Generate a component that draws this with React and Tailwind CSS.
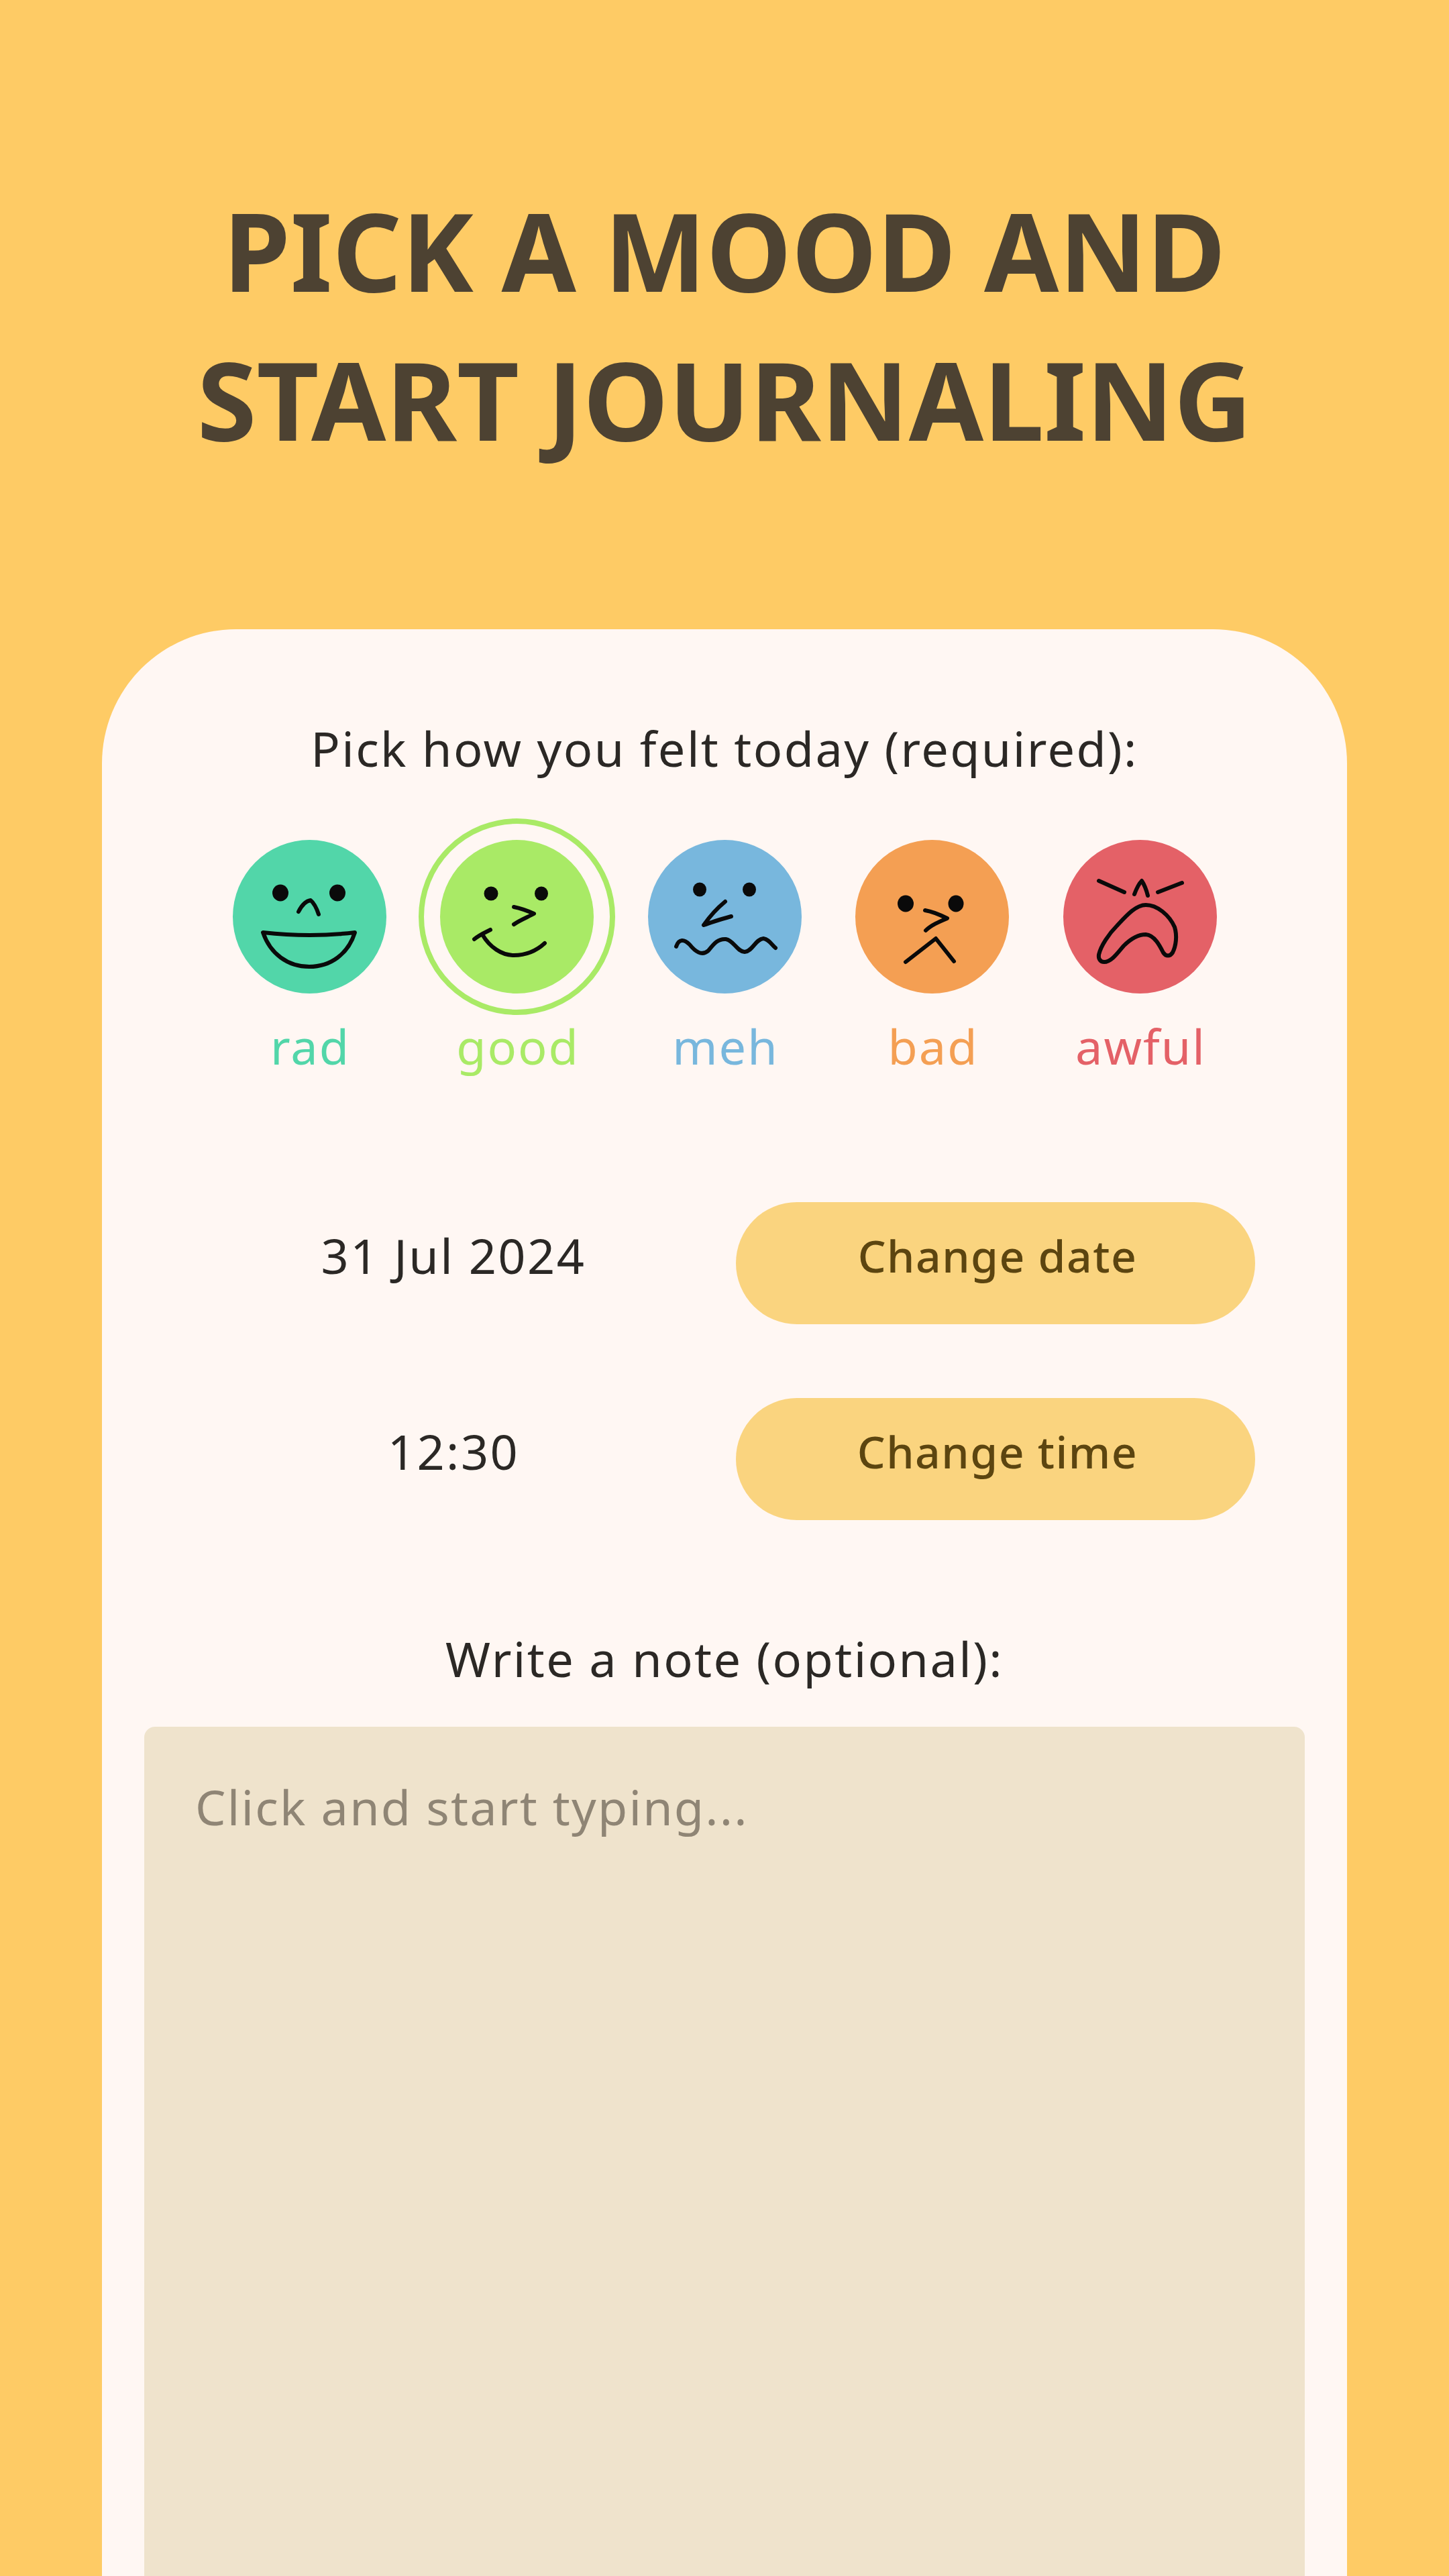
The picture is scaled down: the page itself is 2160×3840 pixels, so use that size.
const moods = [
  { name: 'rad', bg: 'bg-[#52d6a9]', text: 'text-[#52d6a9]' },
  { name: 'good', bg: 'bg-[#a9ea66]', text: 'text-[#a9ea66]', selected: true },
  { name: 'meh', bg: 'bg-[#78b7dd]', text: 'text-[#78b7dd]' },
  { name: 'bad', bg: 'bg-[#f49f53]', text: 'text-[#f49f53]' },
  { name: 'awful', bg: 'bg-[#e46167]', text: 'text-[#e46167]' },
];

function FaceDrawing({ name }) {
  return (
    <svg viewBox="0 0 229 229" className="w-full h-full" fill="none" stroke="#0a0a0a" strokeWidth="6" strokeLinecap="round" strokeLinejoin="round">
      {name === 'rad' && (
        <>
          <ellipse cx="71" cy="79" rx="12" ry="12.5" fill="#0a0a0a" stroke="none" />
          <ellipse cx="156" cy="79" rx="12" ry="12.5" fill="#0a0a0a" stroke="none" />
          <path d="M98 107 C103 97 109 91 116 90 C121 94 125 102 128 111" />
          <path d="M45 138 C90 143 140 143 182 138 C172 170 146 189 114 189 C82 189 56 170 45 138 Z" />
        </>
      )}
      {name === 'good' && (
        <>
          <ellipse cx="76" cy="80" rx="10.5" ry="10.5" fill="#0a0a0a" stroke="none" />
          <ellipse cx="151" cy="80" rx="10" ry="10.5" fill="#0a0a0a" stroke="none" />
          <path d="M110 100 C120 102 131 106 140 110 C131 115 118 120 110 126" />
          <path d="M51 148 C58 142 67 138 75 134" />
          <path d="M63 141 C74 160 92 172 110 172 C128 172 144 165 156 154" />
        </>
      )}
      {name === 'meh' && (
        <>
          <ellipse cx="77" cy="74" rx="10" ry="10.5" fill="#0a0a0a" stroke="none" />
          <ellipse cx="151" cy="74" rx="10" ry="10.5" fill="#0a0a0a" stroke="none" />
          <path d="M115 92 C104 101 92 114 83 127 C96 122 110 118 124 114" />
          <path d="M42 159 C46 147 54 148 62 156 C70 166 80 174 90 165 C98 155 104 147 116 148 C128 150 132 166 144 167 C156 166 160 148 172 147 C180 148 184 156 190 161" />
        </>
      )}
      {name === 'bad' && (
        <>
          <ellipse cx="75" cy="95" rx="12" ry="12.5" fill="#0a0a0a" stroke="none" />
          <ellipse cx="150" cy="95" rx="11.5" ry="12.5" fill="#0a0a0a" stroke="none" />
          <path d="M104 105 C116 107 127 112 137 117 C125 122 113 127 105 135" />
          <path d="M75 182 L120 147 L147 181" />
        </>
      )}
      {name === 'awful' && (
        <>
          <path d="M53 61 L91 78" />
          <path d="M141 78 L177 64" />
          <path d="M106 81 C109 73 112 66 117 61 C121 67 124 75 126 83" />
          <path d="M53 171 C56 158 68 140 80 128 C94 113 108 97 123 97 C140 97 158 112 166 130 C170 143 168 158 163 168 C159 174 153 174 149 168 C144 158 136 142 123 141 C112 141 100 148 90 158 C82 167 72 182 61 182 C55 182 52 177 53 171 Z" />
        </>
      )}
    </svg>
  );
}

function MoodItem({ mood }) {
  return (
    <div className="w-[309.5px] flex flex-col items-center">
      <div className={`w-[293px] h-[293px] rounded-full flex items-center justify-center border-[8px] ${mood.selected ? 'border-[#a9ea66]' : 'border-transparent'}`}>
        <div className={`w-[229px] h-[229px] rounded-full ${mood.bg}`}>
          <FaceDrawing name={mood.name} />
        </div>
      </div>
      <span className={`-mt-[3px] pl-[3px] text-[72px] leading-[98px] tracking-[2px] ${mood.text}`}>{mood.name}</span>
    </div>
  );
}

function DateRow({ value, action, className }) {
  return (
    <div className={`flex items-center gap-[26px] pl-[125px] ${className}`}>
      <span className="w-[794px] pl-[4px] text-center text-[72px] leading-[98px] tracking-[2.5px] text-[#2b2825] -mt-[25px]">{value}</span>
      <button className="w-[774px] h-[182px] rounded-full bg-[#fad47f] text-[#5c4510] text-[66px] font-medium tracking-[1.5px] pl-[6px] pb-[24px]">
        {action}
      </button>
    </div>
  );
}

export default function App() {
  return (
    <div className="w-[2160px] h-[3840px] bg-[#fecb65] overflow-hidden flex flex-col font-['Noto_Sans',sans-serif]">
      <h1 className="pt-[262px] text-center text-[161px] leading-[222px] font-bold text-[#4d4232]">
        PICK A MOOD AND
        <br />
        START JOURNALING
      </h1>

      <div className="mt-[232px] mx-[152px] flex-1 bg-[#fff7f3] rounded-t-[200px] flex flex-col">
        <p className="mt-[128px] text-center text-[72px] leading-[98px] tracking-[2.4px] text-[#2b2825]">
          Pick how you felt today (required):
        </p>

        <div className="mt-[56px] flex justify-center">
          {moods.map((mood) => (
            <MoodItem key={mood.name} mood={mood} />
          ))}
        </div>

        <DateRow value="31 Jul 2024" action="Change date" className="mt-[184px]" />
        <DateRow value="12:30" action="Change time" className="mt-[110px]" />

        <p className="mt-[157px] text-center text-[72px] leading-[98px] tracking-[2.4px] text-[#2b2825]">
          Write a note (optional):
        </p>

        <div className="mt-[53px] mx-[63px] flex-1 bg-[#efe3cc] rounded-t-[16px] px-[76px] pt-[70px]">
          <span className="block text-[72px] leading-[98px] tracking-[2.2px] text-[#8f8575]">Click and start typing...</span>
        </div>
      </div>
    </div>
  );
}
